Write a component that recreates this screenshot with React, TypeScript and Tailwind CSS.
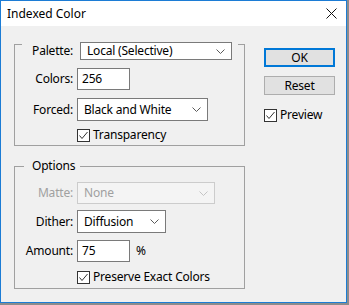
const font = { fontFamily: '"Noto Sans", "Open Sans", Arial, sans-serif' };

const Chevron = ({ muted }: { muted?: boolean }) => (
  <svg width="9" height="5" viewBox="0 0 9 5" className="shrink-0">
    <path
      d="M0.5 0.5 L4.5 4.5 L8.5 0.5"
      fill="none"
      stroke={muted ? "#c4c4c4" : "#5a5a5a"}
      strokeWidth="1"
    />
  </svg>
);

const Select = ({
  value,
  className,
  disabled,
}: {
  value: string;
  className: string;
  disabled?: boolean;
}) => (
  <div
    className={`flex items-center justify-between border pl-[6px] pr-[6px] ${
      disabled
        ? "border-[#cccccc] bg-[#f4f4f4] text-[#a0a0a0]"
        : "border-[#7a7a7a] bg-white text-black"
    } ${className}`}
  >
    <span>{value}</span>
    <Chevron muted={disabled} />
  </div>
);

const Input = ({ value }: { value: string }) => (
  <div className="flex h-[22px] w-[53px] items-center border border-[#7a7a7a] bg-white pl-[4px] text-black">
    {value}
  </div>
);

const Checkbox = ({ label }: { label: string }) => (
  <div className="flex h-[16px] items-center">
    <div className="flex h-[13px] w-[13px] items-center justify-center border border-[#333333] bg-white">
      <svg width="11" height="11" viewBox="0 0 11 11">
        <path d="M1.5 5.5 L4 8.5 L9.5 2" fill="none" stroke="#333333" strokeWidth="1" />
      </svg>
    </div>
    <span className="ml-[3px]">{label}</span>
  </div>
);

const Label = ({ text, muted }: { text: string; muted?: boolean }) => (
  <span className={`w-[58px] shrink-0 text-right ${muted ? "text-[#a0a0a0]" : ""}`}>{text}</span>
);

export default function App() {
  return (
    <div className="h-[305px] w-[349px] bg-[#8c8c8c]" style={font}>
      <div className="flex h-[303px] w-[347px] flex-col border border-[#1c7cd5] bg-[#f0f0f0] text-[12px] leading-[16px] tracking-[-0.2px] text-black">
        <div className="flex h-[25px] shrink-0 items-center justify-between bg-white pl-[6px] pr-[9px] tracking-normal">
          <span>Indexed Color</span>
          <svg width="11" height="11" viewBox="0 0 11 11">
            <path d="M0.5 0.5 L10.5 10.5 M10.5 0.5 L0.5 10.5" stroke="#111" strokeWidth="1" />
          </svg>
        </div>

        <div className="flex">
          <div className="ml-[13px] flex w-[231px] flex-col">
            <div className="mt-[18px] flex flex-col border border-[#a0a0a0] pb-[2px]">
              <div className="-mt-[3px] ml-[7px] flex h-[18px] w-fit items-center bg-[#f0f0f0] pr-[6px]">
                <span className="w-[51px] text-right">Palette:</span>
                <Select value="Local (Selective)" className="ml-[7px] h-[18px] w-[152px]" />
              </div>
              <div className="mt-[8px] flex items-center">
                <Label text="Colors:" />
                <div className="ml-[4px]">
                  <Input value="256" />
                </div>
              </div>
              <div className="mt-[8px] flex items-center">
                <Label text="Forced:" />
                <Select value="Black and White" className="ml-[4px] h-[23px] w-[131px]" />
              </div>
              <div className="ml-[62px] mt-[6px]">
                <Checkbox label="Transparency" />
              </div>
            </div>

            <div className="mt-[20px] flex flex-col border border-[#a0a0a0] pb-[3px]">
              <div className="-mt-[9px] ml-[9px] w-fit bg-[#f0f0f0] pl-[8px] pr-[5px]">Options</div>
              <div className="mt-[8px] flex items-center">
                <Label text="Matte:" muted />
                <Select value="None" disabled className="ml-[4px] h-[22px] w-[138px]" />
              </div>
              <div className="mt-[6px] flex items-center">
                <Label text="Dither:" />
                <Select value="Diffusion" className="ml-[4px] h-[23px] w-[89px]" />
              </div>
              <div className="mt-[7px] flex items-center">
                <Label text="Amount:" />
                <div className="ml-[4px]">
                  <Input value="75" />
                </div>
                <span className="ml-[6px]">%</span>
              </div>
              <div className="ml-[62px] mt-[7px]">
                <Checkbox label="Preserve Exact Colors" />
              </div>
            </div>
          </div>

          <div className="ml-[19px] flex flex-col pt-[22px]">
            <button className="flex h-[19px] w-[71px] items-center justify-center border-2 border-[#0078d7] bg-[#e1e1e1]">
              OK
            </button>
            <button className="mt-[9px] flex h-[19px] w-[71px] items-center justify-center border border-[#adadad] bg-[#e1e1e1]">
              Reset
            </button>
            <div className="mt-[12px]">
              <Checkbox label="Preview" />
            </div>
          </div>
        </div>
      </div>
    </div>
  );
}
